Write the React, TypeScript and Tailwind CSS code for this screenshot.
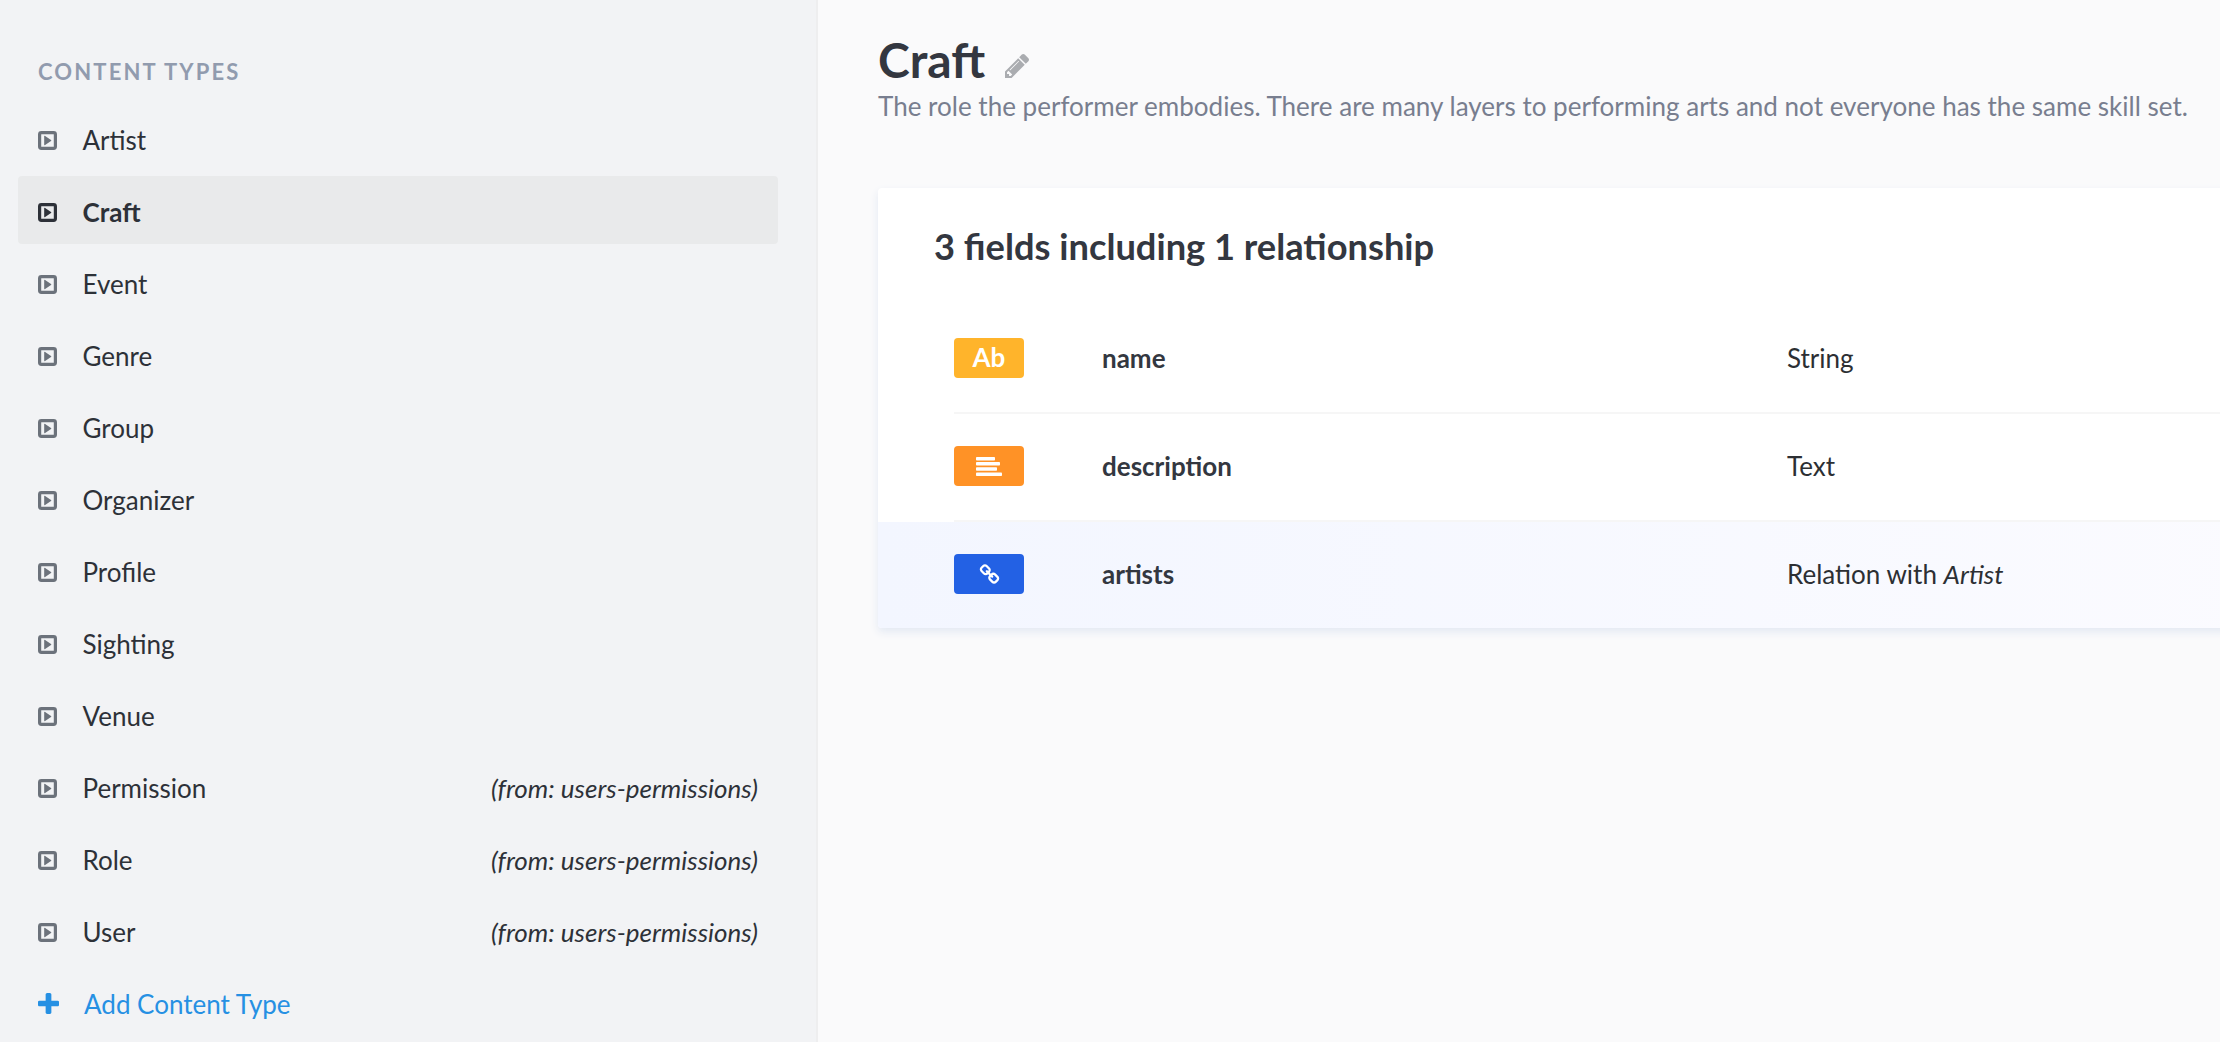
const contentTypes = [
  { name: "Artist" },
  { name: "Craft", active: true },
  { name: "Event" },
  { name: "Genre" },
  { name: "Group" },
  { name: "Organizer" },
  { name: "Profile" },
  { name: "Sighting" },
  { name: "Venue" },
  { name: "Permission", source: "users-permissions" },
  { name: "Role", source: "users-permissions" },
  { name: "User", source: "users-permissions" },
];

function CaretSquare({ active }: { active?: boolean }) {
  return (
    <svg
      viewBox="0 0 19 19"
      className={active ? "mt-px h-[19px] w-[19px] text-[#2d3138]" : "mt-px h-[19px] w-[19px] text-[#6c727b]"}
    >
      <rect x="1.6" y="1.6" width="15.8" height="15.8" rx="1.8" fill="none" stroke="currentColor" strokeWidth="3.2" />
      <path d="M6.2 5.4q0-1 .9-.5l5.9 4q.8.6 0 1.200l-5.900 4q-.9.5-.9-.5z" fill="currentColor" />
    </svg>
  );
}

function PlusIcon() {
  return (
    <svg viewBox="192 128 1408 1408" className="h-[21px] w-[21px]" fill="currentColor">
      <path d="M1600 736v192q0 40-28 68t-68 28h-416v416q0 40-28 68t-68 28h-192q-40 0-68-28t-28-68v-416h-416q-40 0-68-28t-28-68v-192q0-40 28-68t68-28h416v-416q0-40 28-68t68-28h192q40 0 68 28t28 68v416h416q40 0 68 28t28 68z" />
    </svg>
  );
}

function PencilIcon() {
  return (
    <svg viewBox="128 149 1515 1515" className="h-6 w-6 text-[#aaacb0]" fill="currentColor">
      <path d="M491 1536l91-91-235-235-91 91v107h128v128h107zm523-928q0-22-22-22-10 0-17 7l-542 542q-7 7-7 17 0 22 22 22 10 0 17-7l542-542q7-7 7-17zm-54-192l416 416-832 832h-416v-416zm683 96q0 53-37 90l-166 166-416-416 166-165q36-38 90-38 53 0 91 38l235 234q37 39 37 91z" />
    </svg>
  );
}

function AlignIcon() {
  return (
    <svg viewBox="0 0 26 19" className="h-[19px] w-[26px]" fill="currentColor">
      <rect width="19" height="3.5" rx="0.8" />
      <rect y="5.1" width="24" height="3.5" rx="0.8" />
      <rect y="10.3" width="21" height="3.5" rx="0.8" />
      <rect y="15.5" width="26" height="3.5" rx="0.8" />
    </svg>
  );
}

function LinkIcon() {
  return (
    <svg viewBox="16 0 1760 1760" className="h-[21px] w-[21px]" fill="currentColor">
      <path d="M1520 1216q0-40-28-68l-208-208q-28-28-68-28-42 0-72 32 3 3 19 18.500t21.500 21.500 15 19 13 25.500 3.500 27.500q0 40-28 68t-68 28q-15 0-27.500-3.500t-25.500-13-19-15-21.500-21.500-18.500-19q-33 31-33 73 0 40 28 68l206 207q27 27 68 27 40 0 68-26l147-146q28-28 28-67zm-703-705q0-40-28-68l-206-207q-28-28-68-28-39 0-68 27l-147 146q-28 28-28 67 0 40 28 68l208 208q27 27 68 27 42 0 72-31-3-3-19-18.500t-21.500-21.500-15-19-13-25.500-3.500-27.500q0-40 28-68t68-28q15 0 27.500 3.500t25.500 13 19 15 21.500 21.500 18.500 19q33-31 33-73zm895 705q0 120-85 203l-147 146q-83 83-203 83-121 0-204-85l-206-207q-83-83-83-203 0-123 88-209l-88-88q-86 88-208 88-120 0-204-84l-208-208q-84-84-84-204t85-203l147-146q83-83 203-83 121 0 204 85l206 207q83 83 83 203 0 123-88 209l88 88q86-88 208-88 120 0 204 84l208 208q84 84 84 204z" />
    </svg>
  );
}

function Sidebar() {
  return (
    <aside className="h-full w-[818px] shrink-0 border-r-2 border-[#eeeeef] bg-[#f2f3f5] pl-[18px] pr-[38px] pt-[56px] text-[#2d3138]">
      <h2 className="pl-5 text-[22px] leading-8 font-bold tracking-[2.13px] text-[#919bae]">CONTENT TYPES</h2>
      <ul className="mt-4 flex flex-col gap-1">
        {contentTypes.map((t) => (
          <li
            key={t.name}
            className={
              t.active
                ? "flex h-[68px] items-center rounded bg-[#e9eaeb] px-5 pt-[3px] font-bold"
                : "flex h-[68px] items-center rounded px-5 pt-[3px]"
            }
          >
            <CaretSquare active={t.active} />
            <span className="ml-[25.5px]">{t.name}</span>
            {t.source && <em className="ml-auto">(from: {t.source})</em>}
          </li>
        ))}
        <li className="flex h-[68px] items-center px-5 pt-[3px] text-[#2690e3]">
          <PlusIcon />
          <span className="ml-[25px]">Add Content Type</span>
        </li>
      </ul>
    </aside>
  );
}

const fields = [
  { name: "name", type: "String", badge: "bg-[#ffb42b]", icon: <span className="pb-0.5 font-bold">Ab</span> },
  { name: "description", type: "Text", badge: "bg-[#ff9226]", icon: <AlignIcon /> },
  {
    name: "artists",
    type: (
      <>
        Relation with <em>Artist</em>
      </>
    ),
    badge: "bg-[#2361e4]",
    icon: <LinkIcon />,
    relation: true,
  },
];

export default function App() {
  return (
    <div className="flex h-[1042px] w-[2220px] overflow-hidden bg-[#fafafb] font-['Lato',sans-serif] text-[26px] leading-9">
      <Sidebar />
      <main className="min-w-0 flex-1 pl-[60px] pt-[30px]">
        <div className="flex h-[60px] items-center">
          <h1 className="text-[48px] leading-[60px] font-bold text-[#333740]">Craft</h1>
          <div className="ml-5 pt-3">
            <PencilIcon />
          </div>
        </div>
        <p className="mt-[-2px] whitespace-nowrap text-[26.04px] text-[#787e8f]">
          The role the performer embodies. There are many layers to performing arts and not everyone has the same skill set.
        </p>
        <section className="mt-16 h-[440px] w-[1400px] rounded bg-white shadow-[0_4px_8px_#e3e9f3]">
          <h3 className="h-[118px] pl-14 pt-[38px] text-[36.25px] leading-10 font-bold text-[#333740]">
            3 fields including 1 relationship
          </h3>
          {fields.map((f) => (
            <div
              key={f.name}
              className={
                f.relation
                  ? "h-[106px] rounded-b bg-linear-to-r from-[#f3f6ff] to-[#fbfbff] pl-[76px]"
                  : "h-[108px] pl-[76px]"
              }
            >
              <div className={f.relation ? "flex h-full items-center pb-0.5" : "flex h-full items-center border-b-2 border-[#f6f6f6] pb-0.5"}>
                <div className={`flex h-10 w-[70px] items-center justify-center rounded text-white ${f.badge}`}>{f.icon}</div>
                <div className="ml-[78px] w-[685px] font-bold text-[#333740]">{f.name}</div>
                <div className="text-[#2c2f33]">{f.type}</div>
              </div>
            </div>
          ))}
        </section>
      </main>
    </div>
  );
}
